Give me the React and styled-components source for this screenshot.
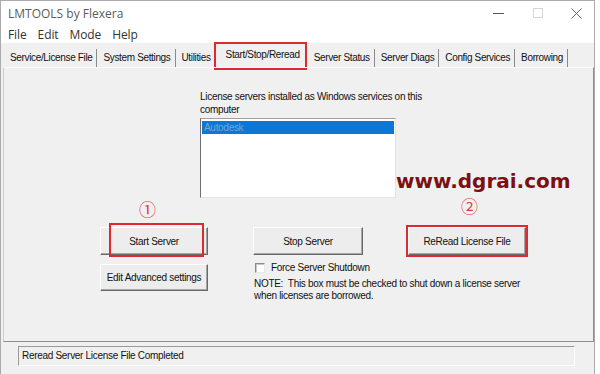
import React from 'react'
import styled, { createGlobalStyle } from 'styled-components'

const TABS = [
    { label: 'Service/License File' },
    { label: 'System Settings' },
    { label: 'Utilities', noSep: true },
    { label: 'Start/Stop/Reread', active: true },
    { label: 'Server Status' },
    { label: 'Server Diags' },
    { label: 'Config Services' },
    { label: 'Borrowing' },
]

const MENU = ['File', 'Edit', 'Mode', 'Help']

const App = () => (
    <>
        <GlobalStyle />
        <Window>
            <TitleBar>
                <Title>LMTOOLS by Flexera</Title>
                <Controls>
                    <Control>
                        <svg width="11" height="1"><rect width="11" height="1" fill="#5a5a5a" /></svg>
                    </Control>
                    <Control>
                        <svg width="10" height="10"><rect x="0.5" y="0.5" width="9" height="9" fill="none" stroke="#d6d6d6" /></svg>
                    </Control>
                    <Control $close>
                        <svg width="11" height="11">
                            <path d="M0.5 0.5 L10.5 10.5 M10.5 0.5 L0.5 10.5" stroke="#666" strokeWidth="1" />
                        </svg>
                    </Control>
                </Controls>
            </TitleBar>

            <MenuBar>
                { MENU.map(m => <MenuItem key={ m }>{ m }</MenuItem>) }
            </MenuBar>

            <Body>
                <TabStrip>
                    { TABS.map(t => (
                        <Tab key={ t.label } $active={ t.active } $noSep={ t.noSep }>
                            { t.label }
                            { t.active && <RedBox $t={ -2 } $l={ -2 } $r={ 0 } $b={ -3 } /> }
                        </Tab>
                    )) }
                </TabStrip>

                <Panel>
                    <Services>
                        <Label>License servers installed as Windows services on this computer</Label>
                        <ListBox>
                            <ListRow $selected>Autodesk</ListRow>
                        </ListBox>
                    </Services>

                    <Actions>
                        <Slot>
                            <Button>Start Server</Button>
                            <RedBox $t={ -4 } $l={ 9 } $r={ 4 } $b={ -2 } />
                        </Slot>
                        <Slot>
                            <Button>Stop Server</Button>
                        </Slot>
                        <Slot>
                            <Button>ReRead License File</Button>
                            <RedBox $t={ -2 } $l={ -2 } $r={ -2 } $b={ -2 } />
                        </Slot>

                        <Slot>
                            <Button $short>Edit Advanced settings</Button>
                        </Slot>
                        <ShutdownBlock>
                            <CheckRow>
                                <CheckBox />
                                <span>Force Server Shutdown</span>
                            </CheckRow>
                            <Note>
                                NOTE:&nbsp; This box must be checked to shut down a license server<br />
                                when licenses are borrowed.
                            </Note>
                        </ShutdownBlock>
                    </Actions>

                    <Watermark>www.dgrai.com</Watermark>
                    <StepMark $x={ 135 } $y={ 132 }>①</StepMark>
                    <StepMark $x={ 457 } $y={ 129 }>②</StepMark>
                </Panel>

                <StatusArea>
                    <StatusBox>Reread Server License File Completed</StatusBox>
                </StatusArea>
            </Body>
        </Window>
    </>
)

export default App

const GlobalStyle = createGlobalStyle`
    html, body {
        margin: 0;
        padding: 0;
        background: #fff;
    }
    body {
        font-family: "Liberation Sans", Arial, sans-serif;
    }
    #root {
        width: 600px;
        height: 374px;
        overflow: hidden;
    }
`

const Window = styled.div`
    width: 595px;
    height: 374px;
    box-sizing: border-box;
    border: 1px solid #ababab;
    border-bottom: none;
    display: flex;
    flex-direction: column;
    background: #fff;
`

const TitleBar = styled.div`
    height: 24px;
    display: flex;
    align-items: center;
    padding-left: 7px;
    flex: none;
`

const Title = styled.div`
    font-family: "Open Sans", "Noto Sans", sans-serif;
    font-size: 12px;
    color: #5c5c5c;
`

const Controls = styled.div`
    margin-left: auto;
    display: flex;
    height: 100%;
`

const Control = styled.div`
    width: ${ p => p.$close ? '36px' : '40px' };
    display: flex;
    align-items: center;
    justify-content: center;
`

const MenuBar = styled.div`
    height: 18px;
    display: flex;
    align-items: center;
    padding-left: 7px;
    gap: 11px;
    flex: none;
`

const MenuItem = styled.div`
    font-family: "Open Sans", "Noto Sans", sans-serif;
    font-size: 12px;
    color: #333;
    letter-spacing: -0.1px;
`

const Body = styled.div`
    flex: 1;
    display: flex;
    flex-direction: column;
    background: #f0f0f0;
    font-size: 10px;
    letter-spacing: -0.3px;
    color: #111;
`

const TabStrip = styled.div`
    height: 24px;
    display: flex;
    align-items: flex-end;
    padding-left: 3px;
    flex: none;
`

const Tab = styled.div`
    position: relative;
    height: ${ p => p.$active ? '23px' : '18px' };
    line-height: ${ p => p.$active ? '22px' : '18px' };
    padding: ${ p => p.$active ? '0 7px 0 10px' : '0 4px 0 6px' };
    border-right: 1px solid ${ p => (p.$active || p.$noSep) ? 'transparent' : '#8a8a8a' };
    box-sizing: border-box;
    white-space: nowrap;
    font-size: 10px;
    letter-spacing: -0.35px;
`

const RedBox = styled.div`
    position: absolute;
    top: ${ p => p.$t }px;
    left: ${ p => p.$l }px;
    right: ${ p => p.$r }px;
    bottom: ${ p => p.$b }px;
    border: 2px solid #dc2a30;
    pointer-events: none;
`

const Panel = styled.div`
    position: relative;
    height: 275px;
    box-sizing: border-box;
    margin-left: 2px;
    flex: none;
    border-top: 1px solid #fafafa;
    border-left: 1px solid #cdcdcd;
    border-right: 1px solid #8e8e8e;
    border-bottom: 1px solid #8e8e8e;
    padding-top: 22px;
`

const Services = styled.div`
    margin-left: 196px;
`

const Label = styled.div`
    width: 232px;
    line-height: 13px;
`

const ListBox = styled.div`
    margin-top: 2px;
    width: 196px;
    height: 80px;
    box-sizing: border-box;
    background: #fff;
    border-top: 1px solid #a0a0a0;
    border-left: 1px solid #6e6e6e;
    border-right: 1px solid #e3e3e3;
    border-bottom: 1px solid #e3e3e3;
    padding: 2px 1px;
`

const ListRow = styled.div`
    height: 13px;
    line-height: 13px;
    padding-left: 2px;
    background: ${ p => p.$selected ? '#0a78d4' : 'transparent' };
    color: ${ p => p.$selected ? '#7fa3cc' : '#111' };
`

const Actions = styled.div`
    margin: 29px 0 0 96px;
    display: grid;
    grid-template-columns: 108px 110px 118px;
    column-gap: 45px;
    row-gap: 7px;
    align-items: start;
`

const Slot = styled.div`
    position: relative;
`

const Button = styled.div`
    height: ${ p => p.$short ? '27px' : '28px' };
    margin-top: ${ p => p.$short ? '2px' : '0' };
    box-sizing: border-box;
    display: flex;
    align-items: center;
    justify-content: center;
    background: #ededed;
    border-top: 1px solid #fff;
    border-left: 1px solid #fff;
    border-right: 1px solid #6a6a6a;
    border-bottom: 1px solid #6a6a6a;
    box-shadow: inset -1px -1px 0 #a6a6a6;
    white-space: nowrap;
`

const ShutdownBlock = styled.div`
    grid-column: 2 / span 2;
`

const CheckRow = styled.div`
    display: flex;
    align-items: center;
    gap: 6px;
    height: 11px;
    padding-left: 2px;
`

const CheckBox = styled.div`
    width: 10px;
    height: 10px;
    box-sizing: border-box;
    background: #fff;
    border-top: 1px solid #8a8a8a;
    border-left: 1px solid #8a8a8a;
    border-right: 1px solid #e8e8e8;
    border-bottom: 1px solid #e8e8e8;
    box-shadow: inset 1px 1px 0 #c8c8c8;
`

const Note = styled.div`
    margin-top: 5px;
    padding-left: 1px;
    line-height: 12px;
    white-space: nowrap;
`

const Watermark = styled.div`
    position: absolute;
    left: 392px;
    top: 103px;
    font-family: "DejaVu Sans", sans-serif;
    font-weight: bold;
    font-size: 20px;
    line-height: 20px;
    letter-spacing: 0;
    color: #7c0f12;
`

const StepMark = styled.div`
    position: absolute;
    left: ${ p => p.$x }px;
    top: ${ p => p.$y }px;
    font-family: "Noto Sans CJK SC", sans-serif;
    font-size: 17px;
    line-height: 18px;
    letter-spacing: 0;
    color: #e23a3e;
`

const StatusArea = styled.div`
    flex: 1;
    padding: 4px 0 0 17px;
`

const StatusBox = styled.div`
    width: 557px;
    height: 20px;
    box-sizing: border-box;
    border-top: 1px solid #9a9a9a;
    border-left: 1px solid #9a9a9a;
    border-right: 1px solid #fff;
    border-bottom: 1px solid #fff;
    line-height: 18px;
    padding-left: 3px;
`
